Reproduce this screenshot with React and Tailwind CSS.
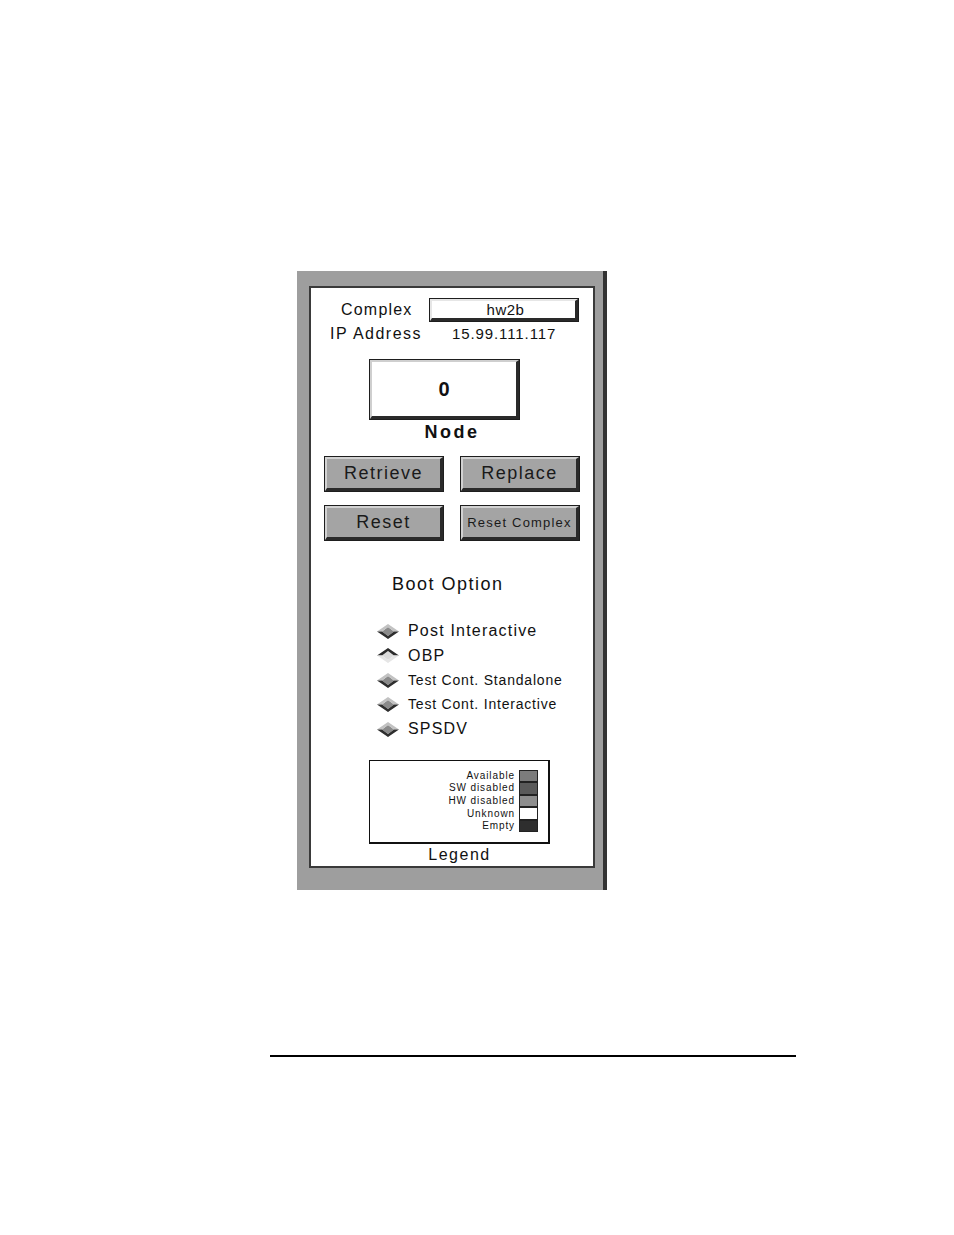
import React from "react";

const font = { fontFamily: '"Liberation Sans", Arial, sans-serif' };

// beveled motif-style box: dark outline, light top/left, dark bottom/right
const Bevel = ({ className = "", face = "bg-white", light = "border-t-[#d6d6d6] border-l-[#d6d6d6]", children }) => (
  <div className={`border border-[#1e1e1e] ${className}`}>
    <div
      className={`h-full w-full flex items-center justify-center border-t-2 border-l-2 border-r-[3px] border-b-[3px] border-r-[#2a2a2a] border-b-[#2a2a2a] ${light} ${face}`}
    >
      {children}
    </div>
  </div>
);

const Diamond = ({ on }) => (
  <svg width="22" height="15" viewBox="0 0 22 15">
    <polygon points="11,3 17,7.5 11,12 5,7.5" fill={on ? "#dcdcdc" : "#8a8a8a"} />
    <polygon points="0,7.5 11,0 22,7.5 17,7.5 11,3 5,7.5" fill={on ? "#2c2c2c" : "#c2c2c2"} />
    <polygon points="0,7.5 5,7.5 11,12 17,7.5 22,7.5 11,15" fill={on ? "#e6e6e6" : "#2e2e2e"} />
  </svg>
);

const bootOptions = [
  { label: "Post Interactive", size: "text-[16px] tracking-[1.2px]" },
  { label: "OBP", size: "text-[16px] tracking-[1.2px]", on: true },
  { label: "Test Cont. Standalone", size: "text-[14px] tracking-[0.8px]" },
  { label: "Test Cont. Interactive", size: "text-[14px] tracking-[0.8px]" },
  { label: "SPSDV", size: "text-[16px] tracking-[1.2px]" },
];

const legend = [
  { label: "Available", color: "bg-[#7c7c7c]" },
  { label: "SW disabled", color: "bg-[#5a5a5a]" },
  { label: "HW disabled", color: "bg-[#8e8e8e]" },
  { label: "Unknown", color: "bg-white" },
  { label: "Empty", color: "bg-[#2e2e2e]" },
];

const buttons = [
  { label: "Retrieve", size: "text-[18px] tracking-[1.5px]" },
  { label: "Replace", size: "text-[18px] tracking-[1.5px]" },
  { label: "Reset", size: "text-[18px] tracking-[1.5px]" },
  { label: "Reset Complex", size: "text-[13px] tracking-[1.2px]" },
];

export default function App() {
  return (
    <div className="min-h-[1235px] bg-white pt-[271px] text-[#111]" style={font}>
      <div className="ml-[297px] w-[310px] bg-[#9e9e9e] border-r-4 border-[#333] pt-[15px] pl-[12px] pr-[8px] pb-[22px]">
        <div className="w-[286px] h-[582px] bg-white border-2 border-[#3a3a3a] flex flex-col">
          {/* complex */}
          <div className="mt-[10px] h-[24px] flex items-center pl-[30px] pr-[14px]">
            <span className="text-[16px] tracking-[1.2px]">Complex</span>
            <Bevel className="ml-auto w-[150px] h-[24px]" light="border-t-[#e6e6e6] border-l-[#e6e6e6]">
              <span className="text-[15px] tracking-[0.5px] leading-none pl-[4px]">hw2b</span>
            </Bevel>
          </div>
          <div className="mt-[2px] h-[20px] flex items-center pl-[19px]">
            <span className="w-[122px] text-[16px] tracking-[1.5px]">IP Address</span>
            <span className="text-[15px] tracking-[0.9px]">15.99.111.117</span>
          </div>

          {/* node */}
          <Bevel className="mt-[15px] ml-[58px] w-[151px] h-[61px]" light="border-t-[#cfcfcf] border-l-[#cfcfcf]">
            <span className="text-[20px] font-bold">0</span>
          </Bevel>
          <div className="mt-[2px] h-[20px] flex items-center justify-center text-[18px] font-bold tracking-[2.5px]">
            Node
          </div>

          {/* action buttons */}
          <div className="mt-[14px] pl-[13px] grid grid-cols-[120px_120px] gap-x-[16px] gap-y-[13px]">
            {buttons.map((b) => (
              <Bevel key={b.label} className="h-[36px]" face="bg-[#a4a4a4]" light="border-t-[#d2d2d2] border-l-[#d2d2d2]">
                <span className={`${b.size} text-[#1a1a1a]`}>{b.label}</span>
              </Bevel>
            ))}
          </div>

          {/* boot option */}
          <div className="mt-[31px] h-[24px] flex items-center pl-[81px] text-[18px] tracking-[1.5px]">
            Boot Option
          </div>
          <div className="mt-[23px] flex flex-col pl-[66px]">
            {bootOptions.map((o) => (
              <div key={o.label} className="h-[24.5px] flex items-center gap-[9px]">
                <Diamond on={o.on} />
                <span className={o.size}>{o.label}</span>
              </div>
            ))}
          </div>

          {/* legend */}
          <div className="mt-[18px] ml-[58px] w-[181px]">
            <div className="h-[84px] border border-[#111] border-r-2 border-b-2 pt-[9px] pr-[10px] flex flex-col items-end">
              {legend.map((l) => (
                <div key={l.label} className="h-[12.6px] flex items-center">
                  <span className="text-[10px] tracking-[0.9px] leading-none mr-[4px]">{l.label}</span>
                  <div className={`w-[19px] h-[12.6px] border border-[#222] ${l.color}`} />
                </div>
              ))}
            </div>
            <div className="mt-[1px] h-[20px] flex items-center justify-center text-[16px] tracking-[1.5px]">
              Legend
            </div>
          </div>
        </div>
      </div>

      <div className="mt-[165px] ml-[270px] w-[526px] h-[2px] bg-black" />
    </div>
  );
}
